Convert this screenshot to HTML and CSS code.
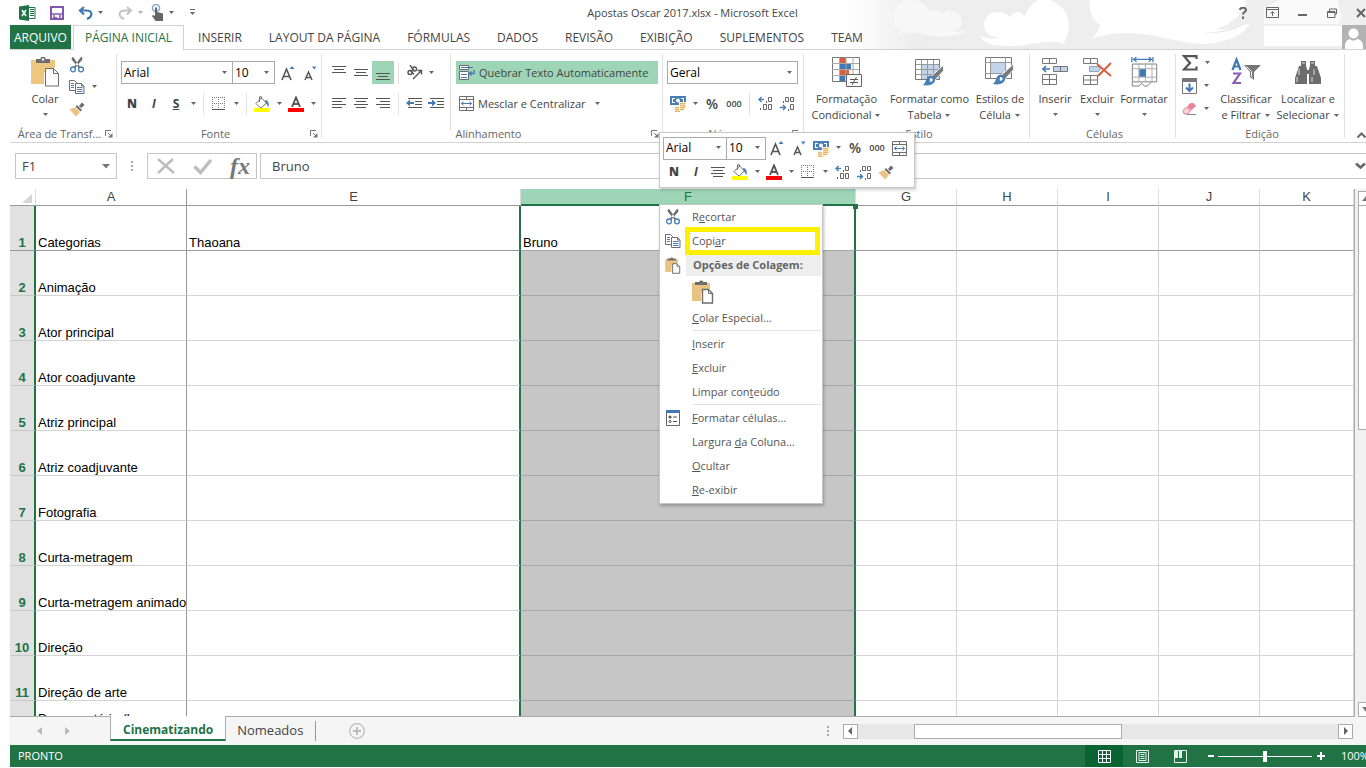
FILE: index.html
```html
<!DOCTYPE html>
<html lang="pt-BR">
<head>
<meta charset="utf-8">
<title>Apostas Oscar 2017.xlsx - Microsoft Excel</title>
<link rel="stylesheet" href="styles.css">
</head>
<body>
<svg class="defs" aria-hidden="true">
  <symbol id="caret" viewBox="0 0 7 4"><path d="M1 0h5L3.500 3z" fill="#666"/></symbol>
  <symbol id="launcher" viewBox="0 0 8 8"><path d="M.5 6V.5H6M3 3l3 3" fill="none" stroke="#777"/><path d="M7.500 3v4.500H3z" fill="#777"/></symbol>
  <symbol id="cut" viewBox="0 0 16 16"><path d="M3 0l1.600.6 6.600 9.500-1.400.8L2.600 2.400zM13 0l-1.600.6L4.800 10.100l1.400.8 7.200-8.500z" fill="#6d6d6d"/><circle cx="4" cy="12.400" r="2.400" fill="none" stroke="#4a7eb6" stroke-width="1.300"/><circle cx="12" cy="12.400" r="2.400" fill="none" stroke="#4a7eb6" stroke-width="1.300"/></symbol>
  <symbol id="copy" viewBox="0 0 16 16"><path d="M.5 1.500h5l2 2v8h-7z" fill="#fff" stroke="#6d6d6d"/><path d="M6.500 4.500h6l2.500 2.500v7.500H6.500z" fill="#fff" stroke="#6d6d6d"/><path d="M12.500 4.500V7H15" fill="none" stroke="#6d6d6d"/><path d="M2 4.500h3M2 6.500h3M2 8.500h3M8 8.500h5.500M8 10.500h5.500M8 12.500h5.500" stroke="#4a7eb6"/></symbol>
  <symbol id="brush" viewBox="0 0 16 16"><path d="M13 1.500L15.500 4l-3.300 3L10 5z" fill="#6d6d6d"/><path d="M8 4l5 5-1.500 1.500-5-5z" fill="#6d6d6d"/><path d="M6 6l5 5-4 4.500L.5 8.500z" fill="#eac282"/></symbol>
  <symbol id="paste" viewBox="0 0 28 30"><path d="M0 3h24v8h-6l-5 5v11H0z" fill="#edc67f"/><path d="M5 6V2h4.500a2.500 2.500 0 0 1 5 0H19v4z" fill="#6d6d6d"/><circle cx="12" cy="2.500" r="1.200" fill="#fff"/><path d="M14.500 11.500h8l5 5v12.500h-13z" fill="#fff" stroke="#6d6d6d"/><path d="M22.500 11.500v5h5" fill="none" stroke="#6d6d6d"/></symbol>
  <symbol id="pasteS" viewBox="0 0 22 24"><path d="M0 3h18v6h-5l-4 4v8H0z" fill="#eac282"/><path d="M3 5V2h4a2.500 2.500 0 0 1 4.500 0H15v3z" fill="#6d6d6d"/><path d="M10.500 9.500h6l4 4v9.500h-10z" fill="#fff" stroke="#6d6d6d" stroke-width="1.400"/><path d="M16.500 9.500v4h4" fill="none" stroke="#6d6d6d"/></symbol>
  <symbol id="growA" viewBox="0 0 16 16"><path d="M2 15L6.500 4 11 15M3.700 11.500h5.600" fill="none" stroke="#555" stroke-width="1.600"/><path d="M9.500 4L12 1l2.500 3z" fill="#4a7eb6"/></symbol>
  <symbol id="shrinkA" viewBox="0 0 16 16"><path d="M3 15l3.500-8L10 15M4.500 12.500h4" fill="none" stroke="#555" stroke-width="1.500"/><path d="M10 1.500h4.500L12.200 4.500z" fill="#4a7eb6"/></symbol>
  <symbol id="borders" viewBox="0 0 14 14"><path d="M0 .5h13M.5 0v12M12.500 0v12M6.500 0v12M0 6.500h13" stroke="#777" stroke-dasharray="1 1"/><path d="M0 12.500h13" stroke="#555"/></symbol>
  <symbol id="fill" viewBox="0 0 16 16"><path d="M2 7.500L7.500 2l5 5-5 4.500H6z" fill="#fff" stroke="#6d6d6d"/><path d="M5.500 6V.8h2V3" fill="none" stroke="#6d6d6d"/><path d="M11 4c3 0 4.500 3 3.500 7-1-.5-1.300-3-3-4z" fill="#4a7eb6"/><path d="M0 12h16v4H0z" fill="#ff0"/></symbol>
  <symbol id="fontA" viewBox="0 0 16 16"><path d="M4 11L8 1.500 12 11M5.500 8h5" fill="none" stroke="#555" stroke-width="1.900"/><path d="M0 12h16v4H0z" fill="red"/></symbol>
  <symbol id="center" viewBox="0 0 14 11"><path d="M0 .5h14M2 3.500h10M0 6.500h14M2 9.500h10" stroke="#555"/></symbol>
  <symbol id="money" viewBox="0 0 17 17"><path d="M0 1h16v9H0z" fill="#4a7eb6"/><path d="M2 3h3v1H3v3h2v1H2zM11 3h3v5h-3V7h2V4h-2z" fill="#fff"/><circle cx="8" cy="5.500" r="2" fill="#fff"/><path d="M9 7h8v10H4v-5h5z" fill="#fff"/><path d="M10 8.500h5.500M10 10.500h5.500M10 12.500h5.500M5 12.500h4M5 14.500h4M5 16.500h5M10 14.500h4" stroke="#e5b865" stroke-width="1.500"/></symbol>
  <symbol id="merge" viewBox="0 0 15 15"><path d="M.5.500h14v14H.5zM0 3.500h15M0 11.500h15M7.500 0v3.500M7.500 11.500V15" fill="none" stroke="#6d6d6d"/><path d="M2 7.500h11M4.500 5.500l-2 2 2 2M10.500 5.500l2 2-2 2" fill="none" stroke="#4a7eb6"/></symbol>
  <symbol id="incdec" viewBox="0 0 15 15"><path d="M1 3.500h5M3.500 1L1 3.500 3.500 6" fill="none" stroke="#4a7eb6" stroke-width="1.400"/><path d="M8.500 5v2M10.500 1.500h3v4h-3zM2.500 12v2M5.500 8.500h3v5h-3zM10.500 8.500h3v5h-3z" fill="none" stroke="#666"/></symbol>
  <symbol id="decdec" viewBox="0 0 15 15"><path d="M0 11.500h5.500M3 9l2.500 2.500L3 14" fill="none" stroke="#4a7eb6" stroke-width="1.400"/><path d="M3.500 5v2M5.500 1.500h3v4h-3zM10.500 1.500h3v4h-3zM8.500 13v2M10.500 8.500h3v5h-3z" fill="none" stroke="#666"/></symbol>
  <symbol id="stylebrush" viewBox="0 0 22 24"><path d="M22 1v6L13 17l-4-4z" fill="#7a7a7a" stroke="#fff" stroke-width="1"/><path d="M8 12c4 0 6 3 5 6-2 4-7 5-13 4 4-1 3-9 8-10z" fill="#4a7eb6"/><path d="M8 14.500c2.500 0 3 1.500 2.500 3-1 1.500-2.500 1-3 .5z" fill="#fff"/></symbol>
</svg>

<div class="app">
  <header class="top">
    <svg class="sky" viewBox="0 0 526 49" preserveAspectRatio="xMaxYMin slice" aria-hidden="true">
      <defs><linearGradient id="haze"><stop offset="0" stop-color="#fff"/><stop offset=".04" stop-color="#fcfcfc"/><stop offset=".14" stop-color="#ededed"/><stop offset="1" stop-color="#efefef"/></linearGradient></defs>
      <path d="M0 0h526v49H0z" fill="url(#haze)"/>
      <path d="M55 26C50 6 62-2 72 0c10 0 16 7 17 12 6-5 12-1 13 2 8-8 20-2 20 8 0 6-4 9-10 9 4 1 9 0 14-1-6 8-30 8-42 4-9-2-18-2-28 1 2-2 3-4 4-6z" fill="#f7f7f7"/>
      <path d="M144 25c0-14 18-17 26-8 6-8 14-5 14 0C192-2 205-4 214 2c14 6 20 25 10 40l4 3c-20-8-38 2-58 1-18 0-28-3-30-11 6 5 14 4 20 2-8 1-16-3-16-12z" fill="#fff"/>
      <path d="M250 0h156c-2 14-14 24-30 29 14 2 22-4 33-5-5 13-28 20-50 20-30-2-66-20-108-5 5-4 8-9 9-14-7-4-12-14-10-25z" fill="#fff"/>
      <path d="M358 31c16 4 34-2 46-8-5 7-28 13-46 8z" fill="#e8e8e8"/>
      <path d="M440 0h58c0 10 6 16 0 24H424V8z" fill="#fafafa"/><path d="M424 26h78v20h-78z" fill="#fff"/>
    </svg>
    <div class="titlebar">
      <div class="quick">
        <svg class="xl" width="17" height="16" viewBox="0 0 17 16"><path d="M9 2.500h7v11H9" fill="#fff" stroke="#217346"/><path d="M11 4.500h4M11 6.500h4M11 8.500h4M11 10.500h4" stroke="#217346" stroke-width="1.200"/><path d="M0 1.500L10 0v16L0 14.500z" fill="#217346"/><path d="M3 5l4 6M7 5l-4 6" stroke="#fff" stroke-width="1.500"/></svg>
        <button class="q" aria-label="Salvar"><svg width="14" height="14" viewBox="0 0 14 14"><path d="M1 1h12v12H1z" fill="#fff" stroke="#8656ae" stroke-width="2"/><path d="M2 8h10M4 9v5M10 9v5" stroke="#8656ae" stroke-width="1.500"/><path d="M4 11h3v3H4z" fill="#8656ae"/></svg></button>
        <button class="q" aria-label="Desfazer"><svg width="15" height="14" viewBox="0 0 15 14"><path d="M6 1L2 4.500 6 8.500M2 4.500h6c7 0 7 6 1 8.500" fill="none" stroke="#4178b4" stroke-width="2.200"/></svg><svg class="caret"><use href="#caret"/></svg></button>
        <button class="q dim" aria-label="Refazer"><svg width="15" height="14" viewBox="0 0 15 14"><path d="M9 1l4 3.500-4 4M13 4.500H7c-7 0-7 6-1 8.500" fill="none" stroke="#888" stroke-width="2"/></svg><svg class="caret"><use href="#caret"/></svg></button>
        <button class="q touch" aria-label="Modo de toque"><svg width="13" height="17" viewBox="0 0 13 17"><circle cx="5" cy="4" r="3.500" fill="none" stroke="#86a9cf" stroke-width="1.600"/><path d="M4 3.500h2V8l6 1.500V17H4.500L1 12l1-1 2 1z" fill="#666"/></svg><svg class="caret"><use href="#caret"/></svg></button>
        <button class="q" aria-label="Personalizar"><svg width="7" height="7" viewBox="0 0 7 7"><path d="M1 .5h5" stroke="#666"/><path d="M1 3h5L3.500 6z" fill="#666"/></svg></button>
      </div>
      <h1 class="title">Apostas Oscar 2017.xlsx - Microsoft Excel</h1>
      <div class="winbtns">
        <button aria-label="Ajuda"><svg width="8" height="12" viewBox="0 0 8 12"><path d="M1 3c0-3 6-3 6 0 0 2-3 2-3 4.500M4 9.500V12" fill="none" stroke="#666" stroke-width="2"/></svg></button>
        <button aria-label="Opções da faixa"><svg width="13" height="11" viewBox="0 0 13 11"><path d="M.5.500h12v10H.5zM0 2.500h13M6.500 9V5M4.500 6.500l2-2 2 2" fill="none" stroke="#666"/></svg></button>
        <button aria-label="Minimizar"><svg width="10" height="11" viewBox="0 0 10 11"><path d="M0 8h9" stroke="#666" stroke-width="2"/></svg></button>
        <button aria-label="Restaurar"><svg width="10" height="10" viewBox="0 0 10 10"><path d="M2.500 3V1h7v5H8M.5 3.500H8v6H.5zM0 4.500h8" fill="none" stroke="#666"/></svg></button>
        <button aria-label="Fechar"><svg width="10" height="10" viewBox="0 0 10 10"><path d="M1 1l8 8M9 1L1 9" stroke="#666" stroke-width="2"/></svg></button>
      </div>
    </div>
    <nav class="tabs">
      <a class="file" href="#">ARQUIVO</a><a class="active" href="#">PÁGINA INICIAL</a><a href="#">INSERIR</a><a href="#">LAYOUT DA PÁGINA</a><a href="#">FÓRMULAS</a><a href="#">DADOS</a><a href="#">REVISÃO</a><a href="#">EXIBIÇÃO</a><a href="#">SUPLEMENTOS</a><a href="#">TEAM</a>
      <svg class="avatar" width="24" height="24" viewBox="0 0 24 24"><path d="M0 0h24v24H0z" fill="#b3b3b3"/><circle cx="11.500" cy="8.500" r="5" fill="#fff"/><path d="M3 24v-3c0-4 3-7 5-7 2 2 5 2 7 0 3 0 6 3 6 7v3z" fill="#fff"/></svg>
    </nav>
  </header>

  <section class="ribbon">
    <div class="group clip">
      <div class="body">
        <button class="big paste"><svg width="28" height="30"><use href="#paste"/></svg><span>Colar</span><svg class="caret"><use href="#caret"/></svg></button>
        <div class="stack">
          <button class="b" aria-label="Recortar"><svg width="16" height="16"><use href="#cut"/></svg></button>
          <div class="row"><button class="b" aria-label="Copiar"><svg width="16" height="16"><use href="#copy"/></svg></button><button class="c" aria-label="Mais"><svg class="caret"><use href="#caret"/></svg></button></div>
          <button class="b" aria-label="Pincel"><svg width="16" height="16"><use href="#brush"/></svg></button>
        </div>
      </div>
      <div class="label"><span>Área de Transf...</span><svg width="8" height="8"><use href="#launcher"/></svg></div>
    </div>

    <div class="group font">
      <div class="body two">
        <div class="row">
          <label class="combo face"><select aria-label="Fonte"><option>Arial</option></select><svg class="caret"><use href="#caret"/></svg></label><label class="combo size"><select aria-label="Tamanho"><option>10</option></select><svg class="caret"><use href="#caret"/></svg></label>
          <button class="b" aria-label="Aumentar"><svg width="16" height="16"><use href="#growA"/></svg></button>
          <button class="b" aria-label="Diminuir"><svg width="16" height="16"><use href="#shrinkA"/></svg></button>
        </div>
        <div class="row">
          <button class="b txt"><b>N</b></button><button class="b txt"><i>I</i></button><button class="b txt"><u>S</u></button><button class="c" aria-label="Mais"><svg class="caret"><use href="#caret"/></svg></button><span class="sep"></span>
          <button class="b" aria-label="Bordas"><svg width="14" height="14"><use href="#borders"/></svg></button><button class="c" aria-label="Mais"><svg class="caret"><use href="#caret"/></svg></button><span class="sep"></span>
          <button class="b" aria-label="Preenchimento"><svg width="16" height="16"><use href="#fill"/></svg></button><button class="c" aria-label="Mais"><svg class="caret"><use href="#caret"/></svg></button>
          <button class="b" aria-label="Cor da fonte"><svg width="16" height="16"><use href="#fontA"/></svg></button><button class="c" aria-label="Mais"><svg class="caret"><use href="#caret"/></svg></button>
        </div>
      </div>
      <div class="label"><span>Fonte</span><svg width="8" height="8"><use href="#launcher"/></svg></div>
    </div>

    <div class="group align">
      <div class="body">
        <div class="two left">
          <div class="row">
            <button class="b" aria-label="Superior"><svg width="14" height="14" viewBox="0 0 14 14"><path d="M0 .5h14M2 3.500h10M0 6.500h14" stroke="#555"/></svg></button>
            <button class="b" aria-label="Meio"><svg width="14" height="14" viewBox="0 0 14 14"><path d="M0 3.500h14M2 6.500h10M0 9.500h14" stroke="#555"/></svg></button>
            <button class="b on" aria-label="Inferior"><svg width="14" height="14" viewBox="0 0 14 14"><path d="M0 7.500h14M2 10.500h10M0 13.500h14" stroke="#555"/></svg></button>
            <span class="sep"></span>
            <button class="b" aria-label="Orientação"><svg width="17" height="15" viewBox="0 0 17 15"><g fill="none" stroke="#555" stroke-width="1.400"><path d="M7 14l8-8M11.500 5.500H15.500V9.500"/><circle cx="4" cy="7.500" r="2"/><path d="M4 5l4 4.500"/><circle cx="8.500" cy="4" r="2"/><path d="M4 0l3.500 5"/></g></svg></button><button class="c" aria-label="Mais"><svg class="caret"><use href="#caret"/></svg></button>
          </div>
          <div class="row">
            <button class="b" aria-label="Esquerda"><svg width="14" height="11" viewBox="0 0 14 11"><path d="M0 .5h14M0 3.500h10M0 6.500h14M0 9.500h10" stroke="#555"/></svg></button>
            <button class="b" aria-label="Centro"><svg width="14" height="11"><use href="#center"/></svg></button>
            <button class="b" aria-label="Direita"><svg width="14" height="11" viewBox="0 0 14 11"><path d="M0 .5h14M4 3.500h10M0 6.500h14M4 9.500h10" stroke="#555"/></svg></button>
            <span class="sep"></span>
            <button class="b" aria-label="Diminuir recuo"><svg width="16" height="11" viewBox="0 0 16 11"><path d="M2 .5h14M9 3.500h7M9 6.500h7M2 9.500h14" stroke="#555"/><path d="M0 5l4-3.500V4h4v2H4v2.500z" fill="#4178b4"/></svg></button>
            <button class="b" aria-label="Aumentar recuo"><svg width="16" height="11" viewBox="0 0 16 11"><path d="M2 .5h14M9 3.500h7M9 6.500h7M2 9.500h14" stroke="#555"/><path d="M8 5L4 1.500V4H0v2h4v2.500z" fill="#4178b4"/></svg></button>
          </div>
        </div>
        <div class="two right">
          <button class="wide on"><svg width="16" height="15" viewBox="0 0 16 15"><path d="M.5.500h9v4h-9zM.5 6.500h9v8h-9z" fill="#fff" stroke="#6d6d6d"/><path d="M2 2.500h12M2 9.500h6M2 12.500h6" stroke="#4178b4"/><path d="M15 5v3.500h-4M12.500 6.500l-2 2 2 2" fill="none" stroke="#4178b4" stroke-width="1.400"/></svg><span>Quebrar Texto Automaticamente</span></button>
          <button class="wide"><svg width="15" height="15"><use href="#merge"/></svg><span class="pad">Mesclar e Centralizar</span><svg class="caret"><use href="#caret"/></svg></button>
        </div>
      </div>
      <div class="label"><span>Alinhamento</span><svg width="8" height="8"><use href="#launcher"/></svg></div>
    </div>

    <div class="group num">
      <div class="body two">
        <div class="row"><label class="combo fmt"><select aria-label="Formato"><option>Geral</option></select><svg class="caret"><use href="#caret"/></svg></label></div>
        <div class="row">
          <button class="b" aria-label="Moeda"><svg width="17" height="17"><use href="#money"/></svg></button><button class="c" aria-label="Mais"><svg class="caret"><use href="#caret"/></svg></button>
          <button class="b pct">%</button><button class="b zeros">000</button><span class="sep"></span>
          <button class="b" aria-label="Aumentar casas"><svg width="15" height="15"><use href="#incdec"/></svg></button><button class="b" aria-label="Diminuir casas"><svg width="15" height="15"><use href="#decdec"/></svg></button>
        </div>
      </div>
      <div class="label"><span>Número</span><svg width="8" height="8"><use href="#launcher"/></svg></div>
    </div>

    <div class="group style">
      <div class="body">
        <button class="big w84"><svg width="30" height="30" viewBox="0 0 30 30"><path d="M.5.500h27v24H.5z" fill="#fff" stroke="#777"/><path d="M8 1h6v5H8zM8 12h9v6H8z" fill="#d65f3f"/><path d="M8 7h11v5H8zM8 19h5v5H8z" fill="#4178b4"/><path d="M7.500 0v24M14 0v24M21 0v24M0 6.500h27M0 12.500h27M0 18.500h27" stroke="#aaa" fill="none"/><path d="M14.500 17.500h15v12h-15z" fill="#fff" stroke="#666"/><path d="M18 22.500h8M18 25.500h8M24.500 20l-4.500 8" stroke="#555"/></svg><span>Formatação<br>Condicional <svg class="caret"><use href="#caret"/></svg></span></button>
        <button class="big w84"><svg width="30" height="30" viewBox="0 0 30 30"><path d="M.5 2.500h24v20H.5z" fill="#fff" stroke="#777"/><path d="M7 8h17v14H7z" fill="#c1d4ea"/><path d="M6.500 3v19M12.500 3v19M18.500 3v19M1 7.500h23M1 12.500h23M1 17.500h23" stroke="#999"/><svg x="7" y="7" width="22" height="23"><use href="#stylebrush"/></svg></svg><span>Formatar como<br>Tabela <svg class="caret"><use href="#caret"/></svg></span></button>
        <button class="big w58"><svg width="30" height="30" viewBox="0 0 30 30"><path d="M.5.500h26v21H.5z" fill="#fff" stroke="#777"/><path d="M5 5h16v12H5z" fill="#c1d4ea"/><path d="M5.500 0v21M20.500 0v21M0 5.500h26M0 16.500h26" stroke="#999"/><svg x="7" y="6" width="22" height="23"><use href="#stylebrush"/></svg></svg><span>Estilos de<br>Célula <svg class="caret"><use href="#caret"/></svg></span></button>
      </div>
      <div class="label"><span>Estilo</span></div>
    </div>

    <div class="group cells">
      <div class="body">
        <button class="big w42"><svg width="28" height="30" viewBox="0 0 28 30"><path d="M1.500 1.500h14v5h-14zM8.500 1.500v5M1.500 17.500h14v10h-14zM8.500 17.500v10M1.500 22.500h14" fill="#fff" stroke="#777"/><path d="M12.500 9.500h14v5h-14z" fill="#c1d4ea" stroke="#777"/><path d="M19.500 9.500v5" stroke="#777"/><path d="M2 12h7M5 9l-3 3 3 3" fill="none" stroke="#4178b4" stroke-width="1.600"/></svg><span>Inserir</span><svg class="caret"><use href="#caret"/></svg></button>
        <button class="big w42"><svg width="30" height="30" viewBox="0 0 30 30"><path d="M1.500 1.500h14v5h-14zM8.500 1.500v5M1.500 18.500h14v9h-14zM8.500 18.500v9M1.500 23h14" fill="#fff" stroke="#777"/><path d="M7.500 9.500h9l2 2.500-2 2.500h-9z" fill="#c1d4ea" stroke="#8aa5c0"/><path d="M15 7l14 12M29 6L16 19" stroke="#d65f3f" stroke-width="2"/></svg><span>Excluir</span><svg class="caret"><use href="#caret"/></svg></button>
        <button class="big w52"><svg width="29" height="32" viewBox="0 0 29 32"><path d="M1 0v5.500M23.500 0v5.500M2 2.500h20M6 0L3 2.500 6 5M19 0l3 2.500L19 5" fill="none" stroke="#4178b4" stroke-width="1.300"/><path d="M1.500 7.500h26v19h-26z" fill="#fff" stroke="#777"/><path d="M8.500 7v19M15.500 7v19M22.500 7v19M1 12.500h26M1 21.500h26" stroke="#aaa"/><path d="M9 13h7v8H9z" fill="#4178b4"/><path d="M1.500 27v4h7l3-3 3 3h3l4-4" fill="none" stroke="#777"/></svg><span>Formatar</span><svg class="caret"><use href="#caret"/></svg></button>
      </div>
      <div class="label"><span>Células</span></div>
    </div>

    <div class="group edit">
      <div class="body">
        <div class="stack">
          <div class="row"><svg width="16" height="16" viewBox="0 0 16 16"><path d="M14.500 4V1.200H2L8 8l-6 6.500h12.500v-3" fill="none" stroke="#555" stroke-width="2.200"/></svg><button class="c" aria-label="Soma"><svg class="caret"><use href="#caret"/></svg></button></div>
          <div class="row"><svg width="15" height="16" viewBox="0 0 15 16"><path d="M.5.500h14v15H.5z" fill="#fff" stroke="#777"/><path d="M0 0h15v4H0z" fill="#777"/><path d="M7.500 5.500V13M4 9.500L7.500 13 11 9.500" fill="none" stroke="#4178b4" stroke-width="2"/></svg><button class="c" aria-label="Preencher"><svg class="caret"><use href="#caret"/></svg></button></div>
          <div class="row"><svg width="15" height="14" viewBox="0 0 15 14"><path d="M8.500 1h3L14 4l-5 4.500-4-4z" fill="#e8849a"/><path d="M4.500 5L8.500 9l-3 3h-3L1 9.500V8.500z" fill="#f3d5db" stroke="#d9778c"/><path d="M5 12.500h9" stroke="#888"/></svg><button class="c" aria-label="Limpar"><svg class="caret"><use href="#caret"/></svg></button></div>
        </div>
        <button class="big w60"><svg width="30" height="30" viewBox="0 0 30 30"><path d="M1.500 13L5.500 2.500 9.500 13M3 9.500h5" fill="none" stroke="#4178b4" stroke-width="2.200"/><path d="M2 16.500h7L2.500 26H10" fill="none" stroke="#8c5bb5" stroke-width="2.200"/><path d="M13 8h17l-7 7v8l-4-3v-5z" fill="#777"/><path d="M15.500 9.500l5 5v5l1 1" stroke="#fff" fill="none"/></svg><span>Classificar<br>e Filtrar <svg class="caret"><use href="#caret"/></svg></span></button>
        <button class="big w64"><svg width="26" height="26" viewBox="0 0 26 26"><path d="M6 2h5v5l1 3v15H0V19L4 7h2zM15 2h5v5h2l4 12v6H14V10l1-3z" fill="#6d6d6d"/><path d="M10 11h6v4h-6z" fill="#6d6d6d"/><path d="M7 4h3M16 4h3M4 10v6M2 18v5M19 10v6M17 18v5" stroke="#fff" stroke-width=".8"/></svg><span>Localizar e<br>Selecionar <svg class="caret"><use href="#caret"/></svg></span></button>
      </div>
      <div class="label"><span>Edição</span></div>
    </div>
    <button class="collapse" aria-label="Recolher"><svg width="9" height="6" viewBox="0 0 9 6"><path d="M.5 5.500l4-4 4 4" fill="none" stroke="#666" stroke-width="2"/></svg></button>
  </section>

  <section class="formula">
    <div class="namebox"><input aria-label="Caixa de nome" value="F1"><svg width="8" height="5" viewBox="0 0 8 5"><path d="M0 0h8L4 4.500z" fill="#777"/></svg></div>
    <span class="dots"></span>
    <div class="fx">
      <button aria-label="Cancelar"><svg width="20" height="18" viewBox="0 0 20 18"><path d="M2 2l16 14M17 2L2 16" stroke="#bdbdbd" stroke-width="2.400"/></svg></button>
      <button aria-label="Inserir"><svg width="20" height="18" viewBox="0 0 20 18"><path d="M1.500 9.500l6 6L18 3" fill="none" stroke="#bdbdbd" stroke-width="3.400"/></svg></button>
      <button class="fn"><i>fx</i></button>
    </div>
    <div class="bar"><input aria-label="Barra de fórmulas" value="Bruno"><svg width="11" height="8" viewBox="0 0 11 8"><path d="M1 1.500l4.500 4 4.500-4" fill="none" stroke="#666" stroke-width="2.600"/></svg></div>
  </section>

  <main class="sheet">
    <div class="cellsview">
    <table>
      <colgroup><col class="ch"><col class="ca"><col class="ce"><col class="cf"><col class="cg"><col class="cg"><col class="cg"><col class="cg"><col></colgroup>
      <thead><tr><th class="corner"><svg width="10" height="9" viewBox="0 0 10 9"><path d="M10 0v9H0z" fill="#d6d6d6"/></svg></th><th>A</th><th>E</th><th class="sel">F</th><th>G</th><th>H</th><th>I</th><th>J</th><th>K</th></tr></thead>
      <tbody>
        <tr class="first"><th>1</th><td>Categorias</td><td>Thaoana</td><td class="f">Bruno</td><td></td><td></td><td></td><td></td><td></td></tr>
        <tr><th>2</th><td>Animação</td><td></td><td class="f"></td><td></td><td></td><td></td><td></td><td></td></tr>
        <tr><th>3</th><td>Ator principal</td><td></td><td class="f"></td><td></td><td></td><td></td><td></td><td></td></tr>
        <tr><th>4</th><td>Ator coadjuvante</td><td></td><td class="f"></td><td></td><td></td><td></td><td></td><td></td></tr>
        <tr><th>5</th><td>Atriz principal</td><td></td><td class="f"></td><td></td><td></td><td></td><td></td><td></td></tr>
        <tr><th>6</th><td>Atriz coadjuvante</td><td></td><td class="f"></td><td></td><td></td><td></td><td></td><td></td></tr>
        <tr><th>7</th><td>Fotografia</td><td></td><td class="f"></td><td></td><td></td><td></td><td></td><td></td></tr>
        <tr><th>8</th><td>Curta-metragem</td><td></td><td class="f"></td><td></td><td></td><td></td><td></td><td></td></tr>
        <tr><th>9</th><td>Curta-metragem animado</td><td></td><td class="f"></td><td></td><td></td><td></td><td></td><td></td></tr>
        <tr><th>10</th><td>Direção</td><td></td><td class="f"></td><td></td><td></td><td></td><td></td><td></td></tr>
        <tr><th>11</th><td>Direção de arte</td><td></td><td class="f"></td><td></td><td></td><td></td><td></td><td></td></tr>
        <tr class="last"><th></th><td>Documentário (longa</td><td></td><td class="f"></td><td></td><td></td><td></td><td></td><td></td></tr>
      </tbody>
    </table>
    </div>
    <div class="vscroll"><button aria-label="Acima"><svg width="8" height="5" viewBox="0 0 8 5"><path d="M0 5h8L4 0z" fill="#777"/></svg></button><div class="vthumb"></div><button class="dn" aria-label="Abaixo"><svg width="8" height="5" viewBox="0 0 8 5"><path d="M0 0h8L4 5z" fill="#777"/></svg></button></div>
  </main>

  <div class="sheettabs">
    <div class="arrows"><svg width="5" height="8" viewBox="0 0 5 8"><path d="M5 0v8L0 4z" fill="#bbb"/></svg><svg width="5" height="8" viewBox="0 0 5 8"><path d="M0 0v8l5-4z" fill="#bbb"/></svg></div>
    <a class="cur" href="#">Cinematizando</a><a class="other" href="#">Nomeados</a>
    <button class="plus" aria-label="Nova planilha"><svg width="16" height="16" viewBox="0 0 16 16"><circle cx="8" cy="8" r="7.300" fill="none" stroke="#bbb" stroke-width="1.200"/><path d="M8 4v8M4 8h8" stroke="#bbb" stroke-width="2"/></svg></button>
    <span class="dots"></span>
    <div class="hscroll"><button aria-label="Esquerda"><svg width="4" height="8" viewBox="0 0 4 8"><path d="M4 0v8L0 4z" fill="#666"/></svg></button><div class="htrack"><div class="hthumb"></div></div><button aria-label="Direita"><svg width="4" height="8" viewBox="0 0 4 8"><path d="M0 0v8l4-4z" fill="#666"/></svg></button></div>
  </div>

  <footer class="status">
    <span>PRONTO</span>
    <div class="views">
      <button class="on" aria-label="Normal"><svg width="13" height="13" viewBox="0 0 13 13"><path d="M.5.500h12v12H.5zM4.500 0v13M8.500 0v13M0 4.500h13M0 8.500h13" fill="none" stroke="#fff"/></svg></button>
      <button aria-label="Layout"><svg width="13" height="13" viewBox="0 0 13 13"><path d="M.5.500h12v12H.5zM3 2.500h7v8H3zM4.500 4.500h4M4.500 6.500h4M4.500 8.500h4" fill="none" stroke="#e4f3ea"/></svg></button>
      <button aria-label="Quebras"><svg width="13" height="13" viewBox="0 0 13 13"><path d="M.5.500h12v12H.5z" fill="none" stroke="#e4f3ea"/><path d="M1 1h3v7H1zM5 1h3v7H5z" fill="#e4f3ea"/></svg></button>
    </div>
    <svg width="6" height="12" viewBox="0 0 6 12"><path d="M0 6h6" stroke="#fff" stroke-width="2"/></svg>
    <input class="zoom" type="range" aria-label="Zoom" value="50">
    <svg width="8" height="12" viewBox="0 0 8 12"><path d="M0 6h8M4 2v8" stroke="#fff" stroke-width="2"/></svg>
    <span class="pc">100%</span>
  </footer>
</div>

<div class="mini">
  <div class="row">
    <label class="combo mface"><select aria-label="Fonte"><option>Arial</option></select><svg class="caret"><use href="#caret"/></svg></label><label class="combo msize"><select aria-label="Tamanho"><option>10</option></select><svg class="caret"><use href="#caret"/></svg></label>
    <button class="b" aria-label="Aumentar"><svg width="16" height="16"><use href="#growA"/></svg></button><button class="b" aria-label="Diminuir"><svg width="16" height="16"><use href="#shrinkA"/></svg></button>
    <button class="b" aria-label="Moeda"><svg width="17" height="17"><use href="#money"/></svg></button><button class="c" aria-label="Mais"><svg class="caret"><use href="#caret"/></svg></button>
    <button class="b pct">%</button><button class="b zeros">000</button><button class="b" aria-label="Mesclar"><svg width="15" height="15"><use href="#merge"/></svg></button>
  </div>
  <div class="row">
    <button class="b txt"><b>N</b></button><button class="b txt"><i>I</i></button><button class="b" aria-label="Centro"><svg width="14" height="11"><use href="#center"/></svg></button>
    <button class="b" aria-label="Preenchimento"><svg width="16" height="16"><use href="#fill"/></svg></button><button class="c" aria-label="Mais"><svg class="caret"><use href="#caret"/></svg></button>
    <button class="b" aria-label="Cor"><svg width="16" height="16"><use href="#fontA"/></svg></button><button class="c" aria-label="Mais"><svg class="caret"><use href="#caret"/></svg></button>
    <button class="b" aria-label="Bordas"><svg width="14" height="14"><use href="#borders"/></svg></button><button class="c" aria-label="Mais"><svg class="caret"><use href="#caret"/></svg></button>
    <button class="b" aria-label="Aumentar casas"><svg width="15" height="15"><use href="#incdec"/></svg></button><button class="b" aria-label="Diminuir casas"><svg width="15" height="15"><use href="#decdec"/></svg></button><button class="b" aria-label="Pincel"><svg width="16" height="16"><use href="#brush"/></svg></button>
  </div>
</div>

<div class="menu" role="menu">
  <button><svg width="16" height="16"><use href="#cut"/></svg><span>R<u>e</u>cortar</span></button>
  <button class="hot"><svg width="16" height="16"><use href="#copy"/></svg><span>Copi<u>a</u>r</span></button>
  <div class="head"><svg width="16" height="17"><use href="#pasteS"/></svg><span>Opções de Colagem:</span></div>
  <button class="pic" aria-label="Colar"><svg width="22" height="24"><use href="#pasteS"/></svg></button>
  <button><span><u>C</u>olar Especial...</span></button>
  <hr>
  <button><span><u>I</u>nserir</span></button>
  <button><span><u>E</u>xcluir</span></button>
  <button><span>Limpar con<u>t</u>eúdo</span></button>
  <hr>
  <button><svg width="16" height="16" viewBox="0 0 16 16"><path d="M1.500.500h13v15h-13z" fill="#fff" stroke="#666"/><path d="M1 0h14v3H1z" fill="#4178b4"/><path d="M8 7h4M8 11.500h4" stroke="#555"/><circle cx="5" cy="7" r="1.500" fill="#555"/><circle cx="5" cy="11.500" r="1.100" fill="none" stroke="#555"/></svg><span><u>F</u>ormatar células...</span></button>
  <button><span>Largura <u>d</u>a Coluna...</span></button>
  <button><span><u>O</u>cultar</span></button>
  <button><span><u>R</u>e-exibir</span></button>
</div>
</body>
</html>
```
FILE: styles.css
```css
* { box-sizing: border-box; }
body { margin: 0; overflow: hidden; background: #fff; color: #444; font: 11px/16px "Open Sans", "Noto Sans", sans-serif; }
button, select, input { margin: 0; padding: 0; border: 0; background: none; color: inherit; font: inherit; }
a { color: inherit; text-decoration: none; }
svg { display: block; flex: none; }
.defs { display: none; }
.app { display: flex; flex-direction: column; height: 100vh; padding: 0 0 1px 10px; }

/* title bar and ribbon tabs */
.top { position: relative; flex: none; border-bottom: 1px solid #d2d2d2; }
.sky { position: absolute; top: 0; right: 0; width: 526px; height: 49px; }
.titlebar { position: relative; display: grid; grid-template-columns: 1fr auto 1fr; height: 25px; align-items: center; }
.quick { display: flex; align-items: center; gap: 14px; padding-left: 9px; height: 22px; }
.q { display: flex; align-items: center; gap: 4px; }
.touch { margin-left: -7px; }
.dim { opacity: .5; }
.caret { width: 7px; height: 4px; }
.title { margin: 0; padding-left: 9px; font-size: 11px; font-weight: 400; }
.winbtns { display: flex; justify-content: flex-end; gap: 19px; height: 22px; align-items: center; }
.tabs { position: relative; display: flex; gap: 1px; height: 25px; margin-bottom: -1px; font-size: 12px; line-height: 24px; }
.tabs a { padding: 0 12px; border: 1px solid transparent; border-bottom: 0; white-space: nowrap; }
.tabs .file { padding: 0 3px; margin-right: 1px; background: #217346; color: #fff; height: 24px; }
.tabs .active { padding: 0 11px; background: #fff; border-color: #d2d2d2; color: #217346; }
.avatar { margin-left: auto; }

/* ribbon */
.ribbon { display: flex; flex: none; height: 93px; padding: 4px 0; border-bottom: 1px solid #d2d2d2; }
.group { display: flex; flex-direction: column; flex: none; border-right: 1px solid #e1e1e1; }
.body { display: flex; height: 76px; }
.two { display: flex; flex-direction: column; gap: 8px; padding-top: 7px; }
.row { display: flex; align-items: center; }
.two .row { height: 23px; }
.label { display: flex; align-items: center; height: 8px; padding-left: 4px; color: #666; }
.label span { flex: 1; text-align: center; white-space: nowrap; }
.label svg { margin-right: 3px; }
.clip { width: 107px; }
.font { width: 205px; }
.font .two, .num .two { padding-left: 4px; }
.align { width: 341px; }
.num { width: 141px; }
.style { width: 226px; padding-left: 1px; }
.cells { width: 146px; }
.edit { width: 169px; }
.cells .body { padding-left: 4px; }
.edit .body { padding-left: 6px; }
.b { display: flex; flex: none; align-items: center; justify-content: center; width: 22px; height: 23px; }
.c { display: flex; flex: none; align-items: center; justify-content: center; width: 12px; height: 22px; }
.txt { font-size: 12px; font-weight: 700; }
.pct { font-size: 14px; font-weight: 600; }
.zeros { font-size: 9px; font-weight: 600; }
.on { background: #9fd5b7; }
.sep { width: 1px; height: 22px; margin: 0 4px; background: #e1e1e1; }
.combo { display: grid; flex: none; align-items: center; height: 23px; border: 1px solid #ababab; background: #fff; color: #000; font-size: 12px; }
.combo > * { grid-area: 1 / 1; }
.combo select { width: 100%; padding-left: 2px; appearance: none; }
.combo .caret { justify-self: end; margin-right: 4px; pointer-events: none; }
.face { width: 112px; }
.size { width: 43px; margin: 0 2px 0 -1px; }
.fmt { width: 131px; }
.left { padding-left: 6px; width: 129px; border-right: 1px solid #e1e1e1; }
.right { padding-left: 5px; }
.wide { display: flex; align-items: center; gap: 4px; width: 202px; height: 23px; padding-left: 3px; font-size: 11px; white-space: nowrap; }
.pad { margin-right: 4px; }
.big { display: flex; flex: none; flex-direction: column; align-items: center; white-space: nowrap; }
.big > svg:first-child { margin: 3px 0 4px; height: 30px; }
.big span .caret { display: inline-block; vertical-align: middle; }
.big > .caret { margin-top: 6px; }
.paste { width: 54px; padding-left: 16px; }
.stack { display: flex; flex-direction: column; }
.stack .b { height: 22px; }
.clip .stack { padding-left: 2px; }
.edit .stack { width: 34px; gap: 7px; padding-top: 1px; }
.edit .stack .row { height: 16px; gap: 3px; }
.w42 { width: 42px; }
.w52 { width: 52px; }
.w58 { width: 58px; }
.w60 { width: 60px; }
.w64 { width: 64px; }
.w84 { width: 83px; }
.collapse { margin: auto 0 0 auto; }

/* formula bar */
.formula { display: flex; flex: none; height: 46px; padding: 10px 0 10px 5px; font-size: 13px; }
.namebox { display: flex; align-items: center; width: 102px; padding: 0 6px; border: 1px solid #c6c6c6; }
.namebox input { flex: 1; min-width: 0; }
.dots { flex: none; align-self: center; width: 2px; height: 10px; background: repeating-linear-gradient(#aaa 0 2px, transparent 2px 4px); }
.formula .dots { margin: 0 14px; }
.fx { display: flex; align-items: center; gap: 17px; width: 110px; padding-left: 8px; border: 1px solid #c6c6c6; }
.fn { font: 700 24px/20px "Liberation Serif", serif; color: #777; }
.bar { display: flex; flex: 1; align-items: center; margin-left: 3px; padding-left: 11px; border: 1px solid #c6c6c6; border-right: 0; }
.bar input { flex: 1; }

/* grid */
.sheet { display: flex; flex: 1; min-height: 0; }
.cellsview { flex: 1; overflow: hidden; border-bottom: 1px solid #ababab; }
table { width: 100%; table-layout: fixed; border-collapse: separate; border-spacing: 0; border-right: 1px solid #ababab; font: 13px/14px "Liberation Sans", Arial, sans-serif; color: #000; }
.ch { width: 26px; }
.ca { width: 151px; }
.ce { width: 334px; }
.cf { width: 335px; }
.cg { width: 101px; }
th, td { padding: 0; overflow: hidden; white-space: nowrap; }
thead th { height: 17px; border-bottom: 1px solid #999; border-right: 1px solid #ddd; color: #444; font-weight: 400; line-height: 16px; }
thead .corner svg { margin: 2px 0 0 12px; }
thead .sel { position: relative; overflow: visible; background: #9fd5b7; color: #217346; border-bottom: 2px solid #217346; line-height: 15px; }
.sel::after { content: ""; position: absolute; right: -3px; bottom: -5px; width: 5px; height: 5px; background: #217346; }
tbody tr { height: 45px; }
tbody th { background: #e1e1e1; border-right: 2px solid #217346; border-bottom: 1px solid #c8c8c8; color: #217346; vertical-align: bottom; }
td { padding-left: 2px; border-right: 1px solid #d4d4d4; border-bottom: 1px solid #d4d4d4; vertical-align: bottom; }
td:nth-child(2), thead th:nth-child(2) { border-right-color: #999; }
.first td, .first th { border-bottom-color: #999; }
td:nth-child(3) { border-right: 2px solid #217346; }
td.f { background: #c6c6c6; border-right: 2px solid #217346; border-bottom-color: #a6a6a6; }
.first td.f { background: #fff; }
.last td { padding-top: 11px; vertical-align: top; }
.vscroll { display: flex; flex: none; flex-direction: column; width: 11px; padding: 2px 0 0 3px; background: #f1f1f1; overflow: hidden; }
.vscroll button { flex: none; width: 15px; height: 15px; padding-left: 3px; border: 1px solid #ababab; background: #fff; }
.vthumb { width: 15px; height: 225px; border: 1px solid #ababab; margin-top: -1px; background: #fff; }
.vscroll .dn { margin-top: auto; }

/* sheet tabs */
.sheettabs { display: flex; flex: none; align-items: center; height: 28px; padding-right: 13px; background: #f5f5f5; font-size: 13px; }
.arrows { display: flex; gap: 23px; width: 100px; padding-left: 27px; }
.cur { align-self: flex-start; height: 25px; margin-top: -1px; padding: 0 12px; border: 1px solid #ababab; border-top: 0; border-bottom: 2px solid #217346; background: #fff; color: #217346; font-size: 12px; font-weight: 700; line-height: 27px; }
.other { height: 20px; padding: 0 12px 0 11px; border-right: 1px solid #999; line-height: 19px; }
.plus { margin-left: 33px; }
.sheettabs .dots { margin-left: auto; }
.hscroll { display: flex; flex: none; width: 38%; height: 15px; margin-left: 14px; background: #e8e8e8; }
.hscroll button { display: flex; align-items: center; justify-content: center; width: 15px; border: 1px solid #ababab; background: #fff; }
.htrack { display: flex; flex: 1; padding-left: 11%; }
.hthumb { width: 49%; border: 1px solid #ababab; background: #fff; }

/* status bar */
.status { display: flex; flex: none; align-items: center; height: 22px; padding-left: 8px; background: #217346; color: #fff; font-size: 11px; }
.views { display: flex; align-self: stretch; margin: 0 9px 0 auto; }
.views button { display: flex; align-items: center; justify-content: center; width: 38px; }
.views .on { background: #0a6332; }
.zoom { width: 94px; height: 12px; margin: 0 5px 0 4px; appearance: none; background: linear-gradient(#fff, #fff) center / 100% 1px no-repeat; }
.zoom::-webkit-slider-thumb { appearance: none; width: 4px; height: 11px; background: #fff; }
.pc { width: 25px; margin-left: 16px; overflow: hidden; }

/* floating toolbar and context menu */
.mini { position: absolute; left: 659px; top: 132px; width: 256px; padding: 3px; border: 1px solid #c6c6c6; background: #fff; box-shadow: 1px 2px 3px rgba(0, 0, 0, .2); }
.mini .row { height: 24px; }
.mface { width: 64px; }
.msize { width: 40px; margin-left: -1px; }
.menu { position: absolute; left: 659px; top: 204px; width: 164px; padding-bottom: 1px; border: 1px solid #c6c6c6; background: #fff; box-shadow: 1px 2px 3px rgba(0, 0, 0, .25); color: #555; }
.menu button, .head { display: grid; grid-template-columns: 16px 1fr; column-gap: 11px; align-items: center; width: 100%; height: 24px; padding-left: 5px; text-align: left; white-space: nowrap; }
.menu span { grid-column: 2; }
.menu .hot { position: relative; z-index: 1; }
.menu .hot span { margin: -2px 2px -2px -7px; height: 28px; border: 5px solid #fff000; padding: 1px 2px; }
.head span { height: 22px; margin: 0 1px 0 -6px; padding: 3px 7px; background: #eee; color: #666; font-weight: 700; }
.menu .pic { height: 29px; }
.menu .pic svg { grid-column: 2; }
.menu hr { height: 1px; margin: 0 1px 1px 33px; border: 0; background: #e1e1e1; }
```
